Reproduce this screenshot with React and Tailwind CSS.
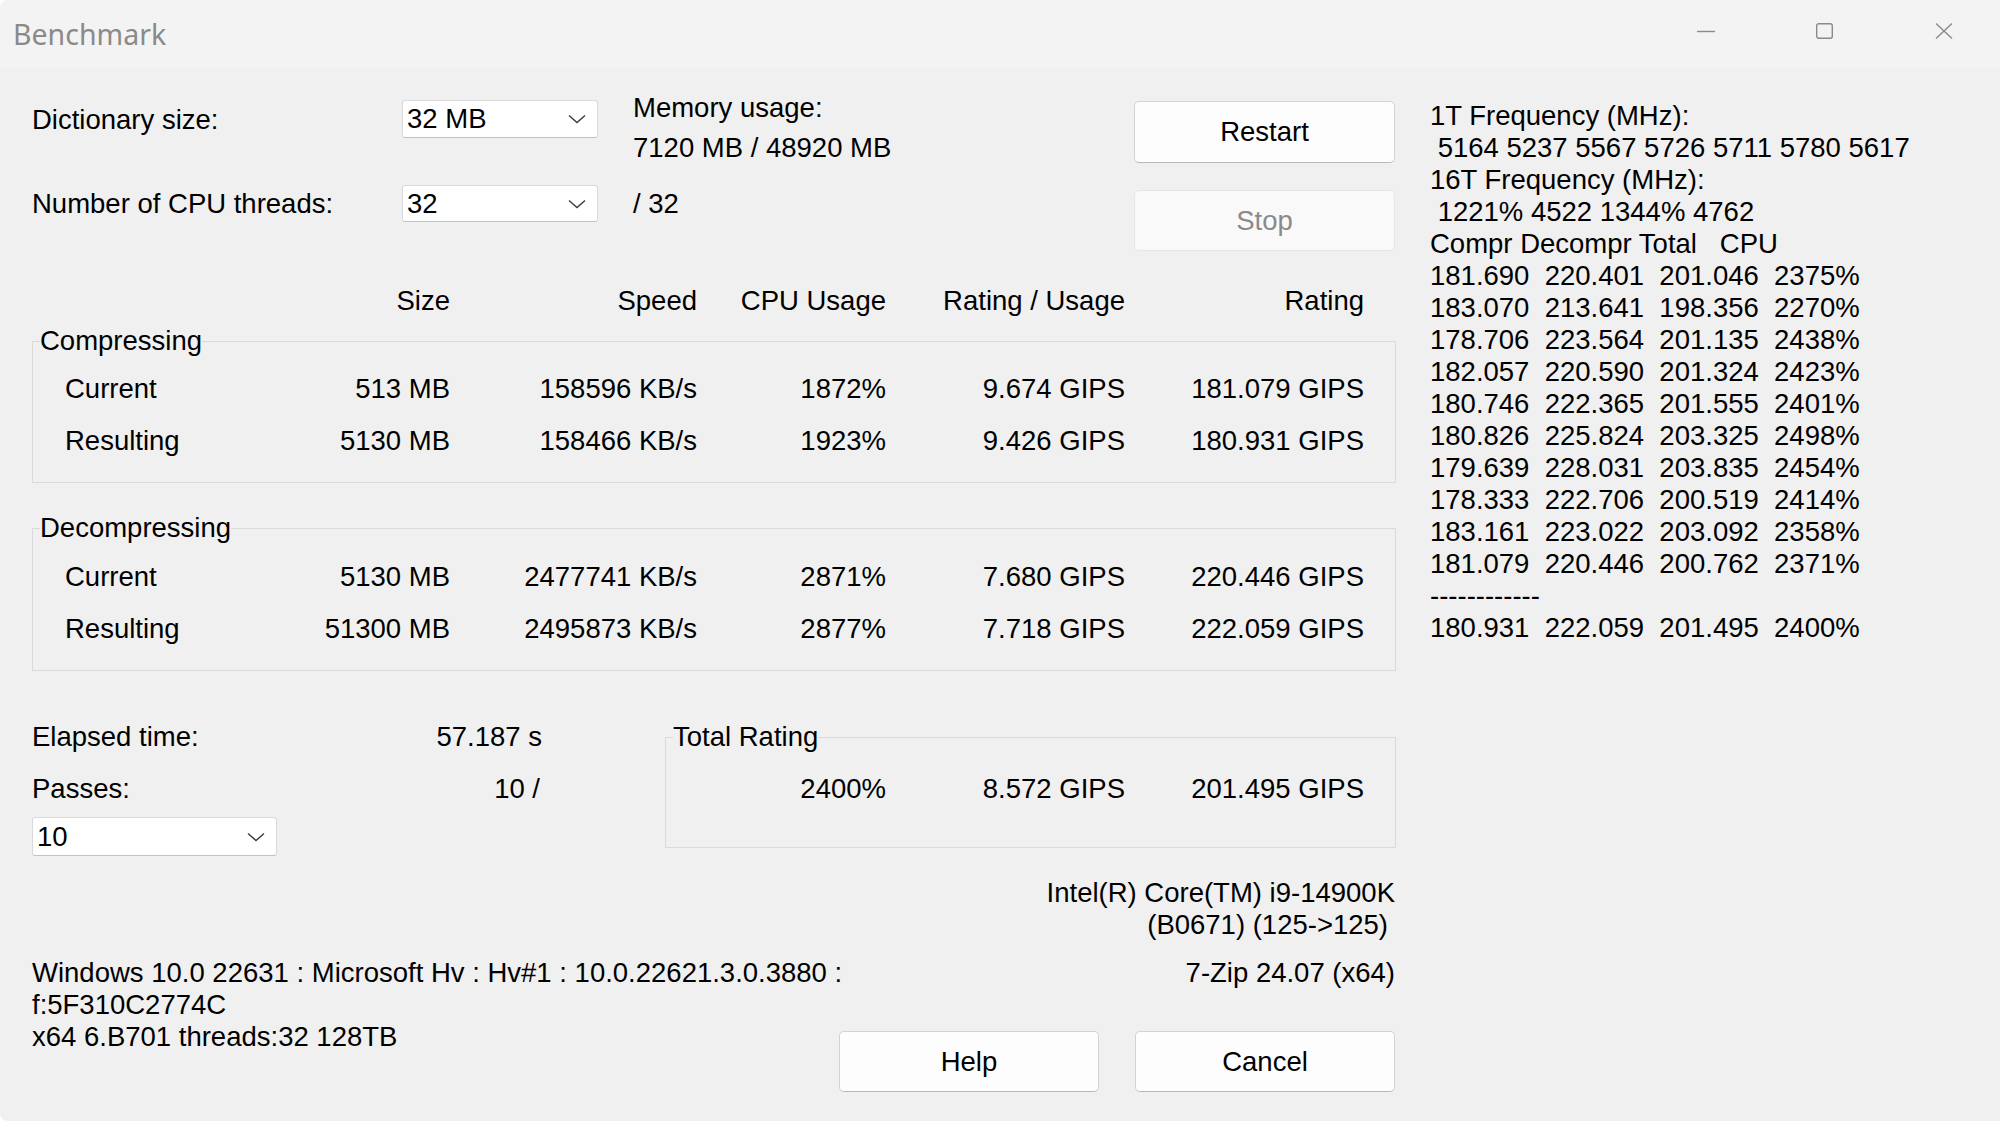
import React from "react";

const cols = "grid grid-cols-[235px_150px_247px_189px_239px_239px]";

const freqLines = [
  "1T Frequency (MHz):",
  " 5164 5237 5567 5726 5711 5780 5617",
  "16T Frequency (MHz):",
  " 1221% 4522 1344% 4762",
  "Compr Decompr Total   CPU",
  "181.690  220.401  201.046  2375%",
  "183.070  213.641  198.356  2270%",
  "178.706  223.564  201.135  2438%",
  "182.057  220.590  201.324  2423%",
  "180.746  222.365  201.555  2401%",
  "180.826  225.824  203.325  2498%",
  "179.639  228.031  203.835  2454%",
  "178.333  222.706  200.519  2414%",
  "183.161  223.022  203.092  2358%",
  "181.079  220.446  200.762  2371%",
  "------------",
  "180.931  222.059  201.495  2400%",
];

function Chevron() {
  return (
    <svg width="18" height="10" viewBox="0 0 18 10" fill="none" className="shrink-0">
      <path d="M1 1.5 L9 8.5 L17 1.5" stroke="#3c3c3c" strokeWidth="1.4" />
    </svg>
  );
}

function Combo({ value, className }) {
  return (
    <div
      className={`flex items-center justify-between bg-white border border-[#d9d9d9] border-b-[#c2c2c2] rounded-[3px] pl-[4px] pr-[11px] ${className}`}
    >
      <span>{value}</span>
      <Chevron />
    </div>
  );
}

function Button({ children, disabled, className }) {
  return (
    <div
      className={`flex items-center justify-center rounded-[5px] border ${
        disabled
          ? "bg-[#f9f9f9] border-[#e6e6e6] text-[#8a8a8a]"
          : "bg-[#fdfdfd] border-[#d3d3d3] border-b-[#b9b9b9] text-black"
      } ${className}`}
    >
      {children}
    </div>
  );
}

function Row({ label, values }) {
  return (
    <div className={`${cols} h-[52px] items-center pl-[32px]`}>
      <span>{label}</span>
      {values.map((v, i) => (
        <span key={i} className="text-right">
          {v}
        </span>
      ))}
    </div>
  );
}

export default function App() {
  return (
    <div
      className="w-[2000px] h-[1121px] bg-[#f0f0f0] text-black text-[27.5px] leading-[32px] overflow-hidden rounded-tl-[8px] rounded-bl-[8px]"
      style={{ fontFamily: '"Liberation Sans", Arial, sans-serif' }}
    >
      {/* title bar */}
      <div className="h-[68px] bg-[#f3f3f3] flex items-start">
        <div
          className="pl-[13px] h-[68px] flex items-center text-[28.5px] text-[#8a8a8a]"
          style={{ fontFamily: '"Segoe UI", "Noto Sans", sans-serif' }}
        >
          Benchmark
        </div>
        <div className="ml-auto flex items-start pt-[23px] mr-[47px]">
          <svg width="18" height="16" viewBox="0 0 18 16">
            <path d="M0 8.5 H18" stroke="#8a8a8a" strokeWidth="1.4" />
          </svg>
          <svg width="17" height="16" viewBox="0 0 17 16" className="ml-[101px]">
            <rect x="0.7" y="0.7" width="15.6" height="14.6" rx="2" fill="none" stroke="#8a8a8a" strokeWidth="1.4" />
          </svg>
          <svg width="18" height="16" viewBox="0 0 18 16" className="ml-[102px]">
            <path d="M1 0.5 L17 15.5 M17 0.5 L1 15.5" stroke="#8a8a8a" strokeWidth="1.4" />
          </svg>
        </div>
      </div>

      {/* body */}
      <div className="flex pt-[32px]">
        <div className="w-[1364px] ml-[32px] shrink-0">
          {/* top controls */}
          <div className="flex items-start">
            <div>
              <div className="flex h-[38px] items-center">
                <span className="w-[370px] pt-[2px]">Dictionary size:</span>
                <Combo value="32 MB" className="w-[196px] h-[38px]" />
                <div className="ml-[35px] self-start -mt-[12px] leading-[40px]">
                  <div>Memory usage:</div>
                  <div>7120 MB / 48920 MB</div>
                </div>
              </div>
              <div className="flex h-[37px] items-center mt-[47px]">
                <span className="w-[370px]">Number of CPU threads:</span>
                <Combo value="32" className="w-[196px] h-[37px]" />
                <span className="ml-[35px]">/ 32</span>
              </div>
            </div>
            <div className="ml-auto mr-[1px] mt-[1px] w-[261px]">
              <Button className="h-[62px]">Restart</Button>
              <Button disabled className="h-[61px] mt-[27px]">
                Stop
              </Button>
            </div>
          </div>

          {/* header */}
          <div className={`${cols} h-[32px] mt-[34px] pl-[33px]`}>
            <span />
            <span className="text-right">Size</span>
            <span className="text-right">Speed</span>
            <span className="text-right">CPU Usage</span>
            <span className="text-right">Rating / Usage</span>
            <span className="text-right">Rating</span>
          </div>

          <fieldset className="mt-[8px] border border-[#dadada] pt-[6px] pb-[15px]">
            <legend className="ml-[7px] h-[32px]">Compressing</legend>
            <Row label="Current" values={["513 MB", "158596 KB/s", "1872%", "9.674 GIPS", "181.079 GIPS"]} />
            <Row label="Resulting" values={["5130 MB", "158466 KB/s", "1923%", "9.426 GIPS", "180.931 GIPS"]} />
          </fieldset>

          <fieldset className="mt-[29px] border border-[#dadada] pt-[7px] pb-[15px]">
            <legend className="ml-[7px] h-[32px]">Decompressing</legend>
            <Row label="Current" values={["5130 MB", "2477741 KB/s", "2871%", "7.680 GIPS", "220.446 GIPS"]} />
            <Row label="Resulting" values={["51300 MB", "2495873 KB/s", "2877%", "7.718 GIPS", "222.059 GIPS"]} />
          </fieldset>

          {/* elapsed / total rating */}
          <div className="flex items-start mt-[50px]">
            <div className="w-[510px] shrink-0">
              <div className="flex justify-between h-[32px]">
                <span>Elapsed time:</span>
                <span>57.187 s</span>
              </div>
              <div className="flex justify-between h-[32px] mt-[20px] pr-[2px]">
                <span>Passes:</span>
                <span>10 /</span>
              </div>
              <Combo value="10" className="w-[245px] h-[39px] mt-[12px]" />
            </div>
            <fieldset className="ml-[123px] w-[731px] border border-[#dadada] pt-[10px] pb-[32px]">
              <legend className="ml-[7px] h-[32px]">Total Rating</legend>
              <div className="grid grid-cols-[220px_239px_239px] h-[52px] items-center">
                <span className="text-right">2400%</span>
                <span className="text-right">8.572 GIPS</span>
                <span className="text-right">201.495 GIPS</span>
              </div>
            </fieldset>
          </div>

          {/* cpu name */}
          <div className="mt-[21px] text-right pr-[1px]">
            <div>Intel(R) Core(TM) i9-14900K</div>
            <div className="pr-[7px]">(B0671) (125-&gt;125)</div>
          </div>

          {/* footer */}
          <div className="mt-[16px] flex justify-between pr-[1px] whitespace-nowrap">
            <span>Windows 10.0 22631 : Microsoft Hv : Hv#1 : 10.0.22621.3.0.3880 :</span>
            <span>7-Zip 24.07 (x64)</span>
          </div>
          <div className="flex items-start">
            <div>
              <div>f:5F310C2774C</div>
              <div>x64 6.B701 threads:32 128TB</div>
            </div>
            <div className="ml-auto mr-[1px] mt-[42px] flex gap-[36px]">
              <Button className="w-[260px] h-[61px]">Help</Button>
              <Button className="w-[260px] h-[61px]">Cancel</Button>
            </div>
          </div>
        </div>

        {/* frequency / per-pass log */}
        <div className="ml-[34px] whitespace-pre">
          {freqLines.map((l, i) => (
            <div key={i} className="h-[32px]">
              {l}
            </div>
          ))}
        </div>
      </div>
    </div>
  );
}
